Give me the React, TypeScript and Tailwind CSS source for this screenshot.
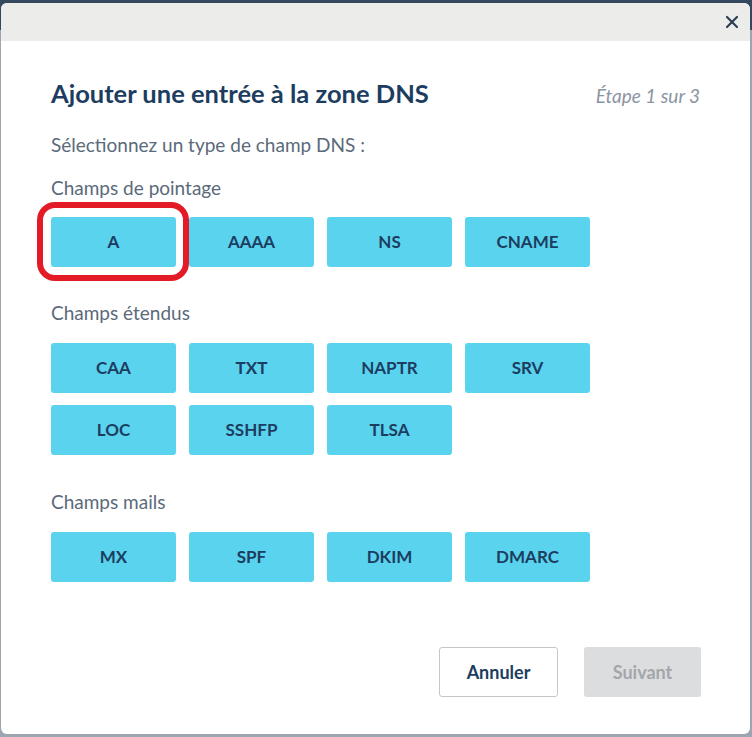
import { X } from "lucide-react";

const groups = [
  { label: "Champs de pointage", items: ["A", "AAAA", "NS", "CNAME"], gap: "mt-[23px]", rowGap: "mt-[19px]" },
  { label: "Champs étendus", items: ["CAA", "TXT", "NAPTR", "SRV", "LOC", "SSHFP", "TLSA"], gap: "mt-[36px]", rowGap: "mt-[20px]" },
  { label: "Champs mails", items: ["MX", "SPF", "DKIM", "DMARC"], gap: "mt-[37px]", rowGap: "mt-[20px]" },
];

function TypeButton({ label, selected }: { label: string; selected?: boolean }) {
  return (
    <div className="relative">
      <button className="w-[125px] h-[50px] rounded-[3px] bg-[#5ad3ef] text-[17px] font-bold text-[#1c3d60]">
        {label}
      </button>
      {selected && (
        <div className="absolute left-[-14px] top-[-15px] w-[152px] h-[79px] rounded-[18px] border-[6px] border-[#e31b26] pointer-events-none" />
      )}
    </div>
  );
}

export default function App() {
  return (
    <main
      className="h-[737px] w-[752px] bg-[linear-gradient(#34495e_0_30px,#9ca5b0_30px)] pt-[3px] pl-[1px] pr-[2px] overflow-hidden"
      style={{ fontFamily: "Lato, 'Noto Sans', sans-serif" }}
    >
      <div className="h-[731px] rounded-[6px] bg-white overflow-hidden flex flex-col">
        <div className="h-[38px] bg-[#ecedea] flex items-center justify-end pr-[8px]">
          <X className="w-[20px] h-[20px] text-[#2c3e50]" strokeWidth={2.6} />
        </div>

        <div className="flex-1 flex flex-col px-[50px]">
          <div className="flex items-baseline justify-between mt-[39px]">
            <h1 className="text-[25.5px] font-bold text-[#1c3d60] leading-[26px]">
              Ajouter une entrée à la zone DNS
            </h1>
            <span className="text-[19px] italic text-[#8a95a3] leading-[20px]">Étape 1 sur 3</span>
          </div>

          <p className="mt-[29px] text-[19px] text-[#5a6a7b] leading-[20px]">
            Sélectionnez un type de champ DNS :
          </p>

          {groups.map((g) => (
            <div key={g.label} className={g.gap}>
              <p className="text-[19px] text-[#5a6a7b] leading-[20px]">{g.label}</p>
              <div className={`${g.rowGap} grid grid-cols-[repeat(4,125px)] gap-x-[13px] gap-y-[12px]`}>
                {g.items.map((item) => (
                  <TypeButton key={item} label={item} selected={item === "A"} />
                ))}
              </div>
            </div>
          ))}

          <div className="mt-auto mb-[37px] mr-[-1px] flex justify-end gap-[26px]">
            <button className="w-[119px] h-[50px] rounded-[3px] border border-[#c3c6ca] bg-white text-[18px] font-bold text-[#1c3d60]">
              Annuler
            </button>
            <button className="w-[117px] h-[50px] rounded-[3px] bg-[#dcdddf] text-[18px] font-bold text-[#a3a6aa]">
              Suivant
            </button>
          </div>
        </div>
      </div>
    </main>
  );
}
